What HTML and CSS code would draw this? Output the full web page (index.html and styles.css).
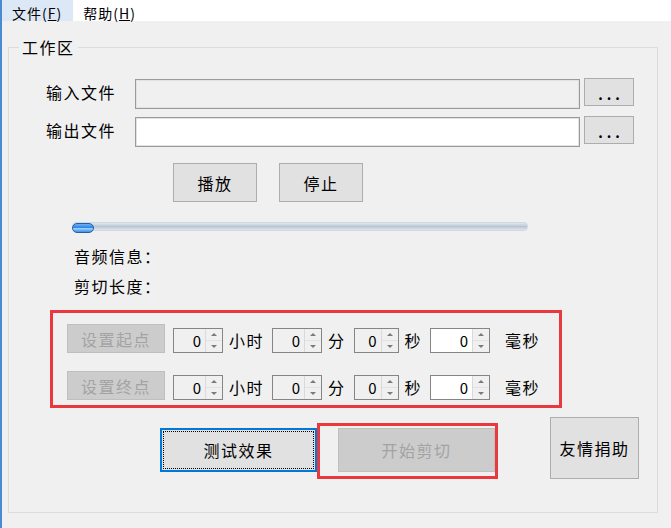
FILE: index.html
```html
<!DOCTYPE html>
<html lang="zh-CN">
<head>
  <meta charset="UTF-8">
  <title>音频剪切</title>
  <link rel="stylesheet" href="styles.css">
</head>
<body>
  <div class="window">

    <!-- 菜单栏 -->
    <div class="menubar">
      <span class="menu-item active">文件(<u>F</u>)</span>
      <span class="menu-item">帮助(<u>H</u>)</span>
    </div>

    <fieldset class="workarea">
      <legend>工作区</legend>

      <div class="file-row">
        <label class="field-label">输入文件</label>
        <input class="path-input disabled" type="text" readonly>
        <button class="btn browse">...</button>
      </div>
      <div class="file-row">
        <label class="field-label">输出文件</label>
        <input class="path-input" type="text">
        <button class="btn browse">...</button>
      </div>

      <div class="player-row">
        <button class="btn play">播放</button>
        <button class="btn play">停止</button>
      </div>

      <div class="slider">
        <div class="slider-track"></div>
        <div class="slider-thumb"></div>
      </div>

      <div class="info">
        <div>音频信息：</div>
        <div>剪切长度：</div>
      </div>

      <!-- 起点 / 终点 -->
      <div class="cut-range">
        <div class="time-row">
          <button class="btn set-point" disabled>设置起点</button>
          <div class="spin"><span class="spin-value">0</span><span class="spin-arrows"><i class="up"></i><i class="down"></i></span></div>
          <span class="unit">小时</span>
          <div class="spin"><span class="spin-value">0</span><span class="spin-arrows"><i class="up"></i><i class="down"></i></span></div>
          <span class="unit">分</span>
          <div class="spin small"><span class="spin-value">0</span><span class="spin-arrows"><i class="up"></i><i class="down"></i></span></div>
          <span class="unit">秒</span>
          <div class="spin wide"><span class="spin-value">0</span><span class="spin-arrows"><i class="up"></i><i class="down"></i></span></div>
          <span class="unit last">毫秒</span>
        </div>
        <div class="time-row">
          <button class="btn set-point" disabled>设置终点</button>
          <div class="spin"><span class="spin-value">0</span><span class="spin-arrows"><i class="up"></i><i class="down"></i></span></div>
          <span class="unit">小时</span>
          <div class="spin"><span class="spin-value">0</span><span class="spin-arrows"><i class="up"></i><i class="down"></i></span></div>
          <span class="unit">分</span>
          <div class="spin small"><span class="spin-value">0</span><span class="spin-arrows"><i class="up"></i><i class="down"></i></span></div>
          <span class="unit">秒</span>
          <div class="spin wide"><span class="spin-value">0</span><span class="spin-arrows"><i class="up"></i><i class="down"></i></span></div>
          <span class="unit last">毫秒</span>
        </div>
      </div>

      <div class="action-row">
        <button class="btn action focused">测试效果</button>
        <span class="cut-wrap">
          <button class="btn action" disabled>开始剪切</button>
        </span>
        <button class="btn donate">友情捐助</button>
      </div>
    </fieldset>
  </div>
</body>
</html>
```

FILE: styles.css
```css
body {
  margin: 0;
  background-color: #f0f0f0;
  font-family: "Noto Sans CJK SC", "Liberation Sans", sans-serif;
  font-size: 16px;
  color: #000;
}

.window {
  height: 528px;
  border-left: 2px solid #4a8ad0;
  box-sizing: border-box;
  overflow: hidden;
}

.menubar {
  display: flex;
  height: 21px;
  background-color: white;
  font-size: 14px;
}

.menu-item {
  height: 21px;
  box-sizing: border-box;
  padding: 5px 11px 0 10px;
  line-height: 16px;
  letter-spacing: 1px;
}

.menu-item.active {
  background-color: #dce8f5;
}

.workarea {
  margin: 16px 0 0 6px;
  padding: 0;
  width: 650px;
  height: 476px;
  box-sizing: border-box;
  border: 1px solid #dcdcdc;
  min-width: 0;
}

.workarea legend {
  margin-left: 10px;
  padding: 0 3px;
  line-height: 20px;
  letter-spacing: 1.5px;
}

.file-row {
  display: flex;
  align-items: flex-start;
  padding-left: 37px;
  margin-top: 8px;
}

.file-row:first-of-type {
  margin-top: 22px;
}

.field-label {
  width: 89px;
  line-height: 26px;
  letter-spacing: 1.5px;
}

.path-input {
  width: 445px;
  height: 30px;
  box-sizing: border-box;
  margin: 0;
  border: 1px solid #9a9a9a;
  box-shadow: inset 0 0 0 1px #e2e2e2;
  background-color: white;
  outline: none;
}

.path-input.disabled {
  background-color: #f0f0f0;
}

.btn {
  margin: 0;
  padding: 0;
  background-color: #e1e1e1;
  border: 1px solid #adadad;
  font-family: inherit;
  font-size: 16px;
  letter-spacing: 1.5px;
  color: #000;
  box-sizing: border-box;
}

.btn:disabled {
  background-color: #cccccc;
  border-color: #bfbfbf;
  color: #a3a3a3;
}

.browse {
  width: 50px;
  height: 28px;
  margin-left: 4px;
  margin-top: -1px;
  font-size: 14px;
  font-weight: bold;
  letter-spacing: 4px;
  padding: 4px 0 0 4px;
}

.player-row {
  display: flex;
  gap: 22px;
  padding-left: 164px;
  margin-top: 16px;
}

.play {
  width: 84px;
  height: 39px;
}

.slider {
  position: relative;
  width: 456px;
  height: 13px;
  margin: 20px 0 0 63px;
}

.slider-track {
  margin-top: 2px;
  height: 7px;
  border: 1px solid #d2d8df;
  border-radius: 4px;
  background: linear-gradient(#e3e8ee, #b8c6d5 50%, #dfe5eb);
}

.slider-thumb {
  position: absolute;
  left: 0;
  top: 1px;
  width: 22px;
  height: 10px;
  box-sizing: border-box;
  border: 1px solid #1f5fae;
  border-radius: 5px;
  background: linear-gradient(#6fb0f2, #2f86e6 45%, #9fd0fa 55%, #3d8fe8);
}

.info {
  margin: 6px 0 0 65px;
  line-height: 30px;
  letter-spacing: 1.5px;
}

.cut-range {
  width: 512px;
  box-sizing: border-box;
  margin: 9px 0 0 41px;
  padding: 11px 0 5px 14px;
  border: 3px solid #e9393e;
}

.time-row {
  display: flex;
  align-items: flex-end;
}

.time-row + .time-row {
  margin-top: 18px;
}

.set-point {
  width: 98px;
  height: 29px;
  margin-right: 8px;
}

.spin {
  display: flex;
  width: 50px;
  height: 25px;
  box-sizing: border-box;
  border: 1px solid #858585;
  background-color: #f0f0f0;
}

.spin.small {
  width: 45px;
}

.spin.wide {
  width: 60px;
  background-color: white;
}

.spin-value {
  flex: 1;
  text-align: right;
  padding-right: 4px;
  font-size: 15px;
  line-height: 23px;
}

.spin-arrows {
  display: flex;
  flex-direction: column;
  width: 16px;
  border-left: 1px solid #dadada;
  background-color: #f0f0f0;
}

.spin-arrows i {
  flex: 1;
  display: flex;
  justify-content: center;
  align-items: center;
}

.spin-arrows i + i {
  border-top: 1px solid #e2e2e2;
}

.spin-arrows .up::before,
.spin-arrows .down::before {
  content: "";
  border-left: 3px solid transparent;
  border-right: 3px solid transparent;
}

.spin-arrows .up::before {
  border-bottom: 3px solid #7a7a7a;
}

.spin-arrows .down::before {
  border-top: 3px solid #7a7a7a;
}

.unit {
  line-height: 25px;
  margin: 0 8px 0 6px;
  letter-spacing: 1.5px;
}

.unit.last {
  margin-left: 15px;
}

.action-row {
  display: flex;
  align-items: flex-start;
  margin: 9px 0 0 151px;
}

.action {
  width: 157px;
  height: 44px;
}

.focused {
  position: relative;
  border: 2px solid #0078d7;
  margin: 11px 21px 0 0;
}

.focused::after {
  content: "";
  position: absolute;
  inset: 1px;
  border: 1px dotted #000;
}

.cut-wrap {
  position: relative;
  display: flex;
  margin-top: 11px;
}

.cut-wrap::after {
  content: "";
  position: absolute;
  left: -21px;
  right: -3px;
  top: -5px;
  bottom: -7px;
  border: 3px solid #e9393e;
}

.donate {
  width: 89px;
  height: 62px;
  margin-left: 55px;
}
```
